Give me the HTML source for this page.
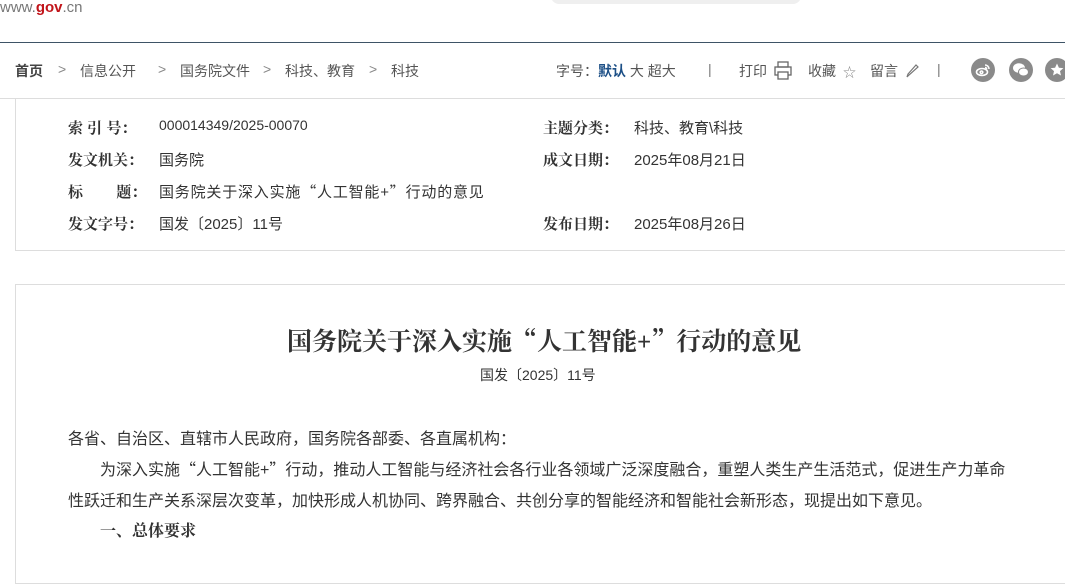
<!DOCTYPE html>
<html><head><meta charset="utf-8"><style>
*{margin:0;padding:0;box-sizing:border-box}
body{width:1065px;height:553px;overflow:hidden;background:#fff;position:relative;font-family:"Liberation Sans","Noto Sans CJK SC",sans-serif;color:#333}
.a{position:absolute;white-space:nowrap}
.q{font-family:"Noto Sans CJK SC",sans-serif}
.nav{font-size:14px;color:#555;top:61px}
.lab{font-weight:bold;font-size:15px;color:#333;font-family:"Liberation Sans","Noto Serif CJK SC",serif}
.val{font-size:15px;color:#333}
.body{font-size:16px;color:#333}
.circ{position:absolute;top:58px;width:24px;height:24px;border-radius:50%;background:#8a8a8a}
</style></head><body>
<div class="a" style="left:0;top:-1px;font-size:15px;color:#777">www.<b style="color:#c1141a">gov</b>.cn</div>
<div class="a" style="left:551px;top:-12px;width:250px;height:16px;border-radius:8px;background:#efefef"></div>
<div class="a" style="left:0;top:42px;width:1065px;height:1px;background:#3e5466"></div>

<div class="a nav" style="left:15px;font-weight:bold;color:#444">首页</div>
<div class="a nav" style="left:58px;color:#888">&gt;</div>
<div class="a nav" style="left:80px">信息公开</div>
<div class="a nav" style="left:158px;color:#888">&gt;</div>
<div class="a nav" style="left:180px">国务院文件</div>
<div class="a nav" style="left:263px;color:#888">&gt;</div>
<div class="a nav" style="left:285px">科技、教育</div>
<div class="a nav" style="left:369px;color:#888">&gt;</div>
<div class="a nav" style="left:391px">科技</div>

<div class="a nav" style="left:556px">字号：<b style="color:#1c4f86">默认</b> 大 超大</div>
<div class="a nav" style="left:708px;color:#777">|</div>
<div class="a nav" style="left:739px">打印</div>
<svg class="a" style="left:773px;top:59px" width="20" height="22" viewBox="0 0 20 22" fill="none" stroke="#666" stroke-width="1.3"><rect x="5" y="3" width="10" height="5"/><rect x="2" y="8" width="16" height="8"/><rect x="5" y="13" width="10" height="7" fill="#fff"/></svg>
<div class="a nav" style="left:808px">收藏</div>
<div class="a nav" style="left:843px;color:#888;font-size:13px;top:62px">☆</div>
<div class="a nav" style="left:870px">留言</div>
<svg class="a" style="left:906px;top:62px" width="14" height="16" viewBox="0 0 14 16" fill="none" stroke="#777" stroke-width="1.2"><path d="M3 13 L1 15 L2 12 L10 3 L12 5 Z"/></svg>
<div class="a nav" style="left:937px;color:#777">|</div>
<div class="circ" style="left:971px"></div>
<svg class="a" style="left:975px;top:63px" width="16" height="14" viewBox="0 0 16 14" fill="none" stroke="#fff" stroke-width="1.6"><ellipse cx="7" cy="9" rx="5.5" ry="3.5"/><circle cx="6.5" cy="9.3" r="1.3"/><path d="M10 2a4 4 0 0 1 4 4M10 4.5a1.6 1.6 0 0 1 1.6 1.6"/></svg>
<div class="circ" style="left:1009px"></div>
<svg class="a" style="left:1012px;top:62px" width="18" height="16" viewBox="0 0 18 16" fill="#fff"><ellipse cx="7" cy="6" rx="6" ry="4.8"/><ellipse cx="11.5" cy="10" rx="5" ry="4" stroke="#8a8a8a" stroke-width="1"/></svg>
<div class="circ" style="left:1045px"></div>
<svg class="a" style="left:1049px;top:62px" width="16" height="16" viewBox="0 0 16 16" fill="#fff"><path d="M8 1.5l1.9 4.2 4.5.4-3.4 3 1 4.4L8 11.2 4 13.5l1-4.4-3.4-3 4.5-.4z"/></svg>
<div class="a" style="left:0;top:98px;width:1065px;height:1px;background:#ddd"></div>

<div class="a" style="left:15px;top:98px;width:1070px;height:153px;border:1px solid #ddd"></div>
<div class="a lab" style="left:68px;top:117px">索 引 号：</div>
<div class="a val" style="left:159px;top:117px;font-size:14px">000014349/2025-00070</div>
<div class="a lab" style="left:68px;top:149px">发文机关：</div>
<div class="a val" style="left:159px;top:149px">国务院</div>
<div class="a lab" style="left:68px;top:181px">标&nbsp;&nbsp;&nbsp;&nbsp;&nbsp;&nbsp;&nbsp;&nbsp;题：</div>
<div class="a val" style="left:159px;top:181px;letter-spacing:0.8px">国务院关于深入实施<span class="q">“</span>人工智能+<span class="q">”</span>行动的意见</div>
<div class="a lab" style="left:68px;top:213px">发文字号：</div>
<div class="a val" style="left:159px;top:213px">国发〔2025〕11号</div>
<div class="a lab" style="left:543px;top:117px">主题分类：</div>
<div class="a val" style="left:634px;top:117px">科技、教育\科技</div>
<div class="a lab" style="left:543px;top:149px">成文日期：</div>
<div class="a val" style="left:634px;top:149px">2025年08月21日</div>
<div class="a lab" style="left:543px;top:213px">发布日期：</div>
<div class="a val" style="left:634px;top:213px">2025年08月26日</div>

<div class="a" style="left:15px;top:284px;width:1070px;height:300px;border:1px solid #ddd"></div>
<div class="a" style="left:287px;top:322px;font-size:25px;font-weight:bold;color:#333;font-family:'Liberation Serif','Noto Serif CJK SC',serif">国务院关于深入实施<span style="font-family:'Noto Serif CJK SC',serif">“</span>人工智能+<span style="font-family:'Noto Serif CJK SC',serif">”</span>行动的意见</div>
<div class="a" style="left:480px;top:365px;font-size:14px;color:#333">国发〔2025〕11号</div>
<div class="a body" style="left:68px;top:425px">各省、自治区、直辖市人民政府，国务院各部委、各直属机构：</div>
<div class="a body" style="left:100px;top:456px">为深入实施<span class="q">“</span>人工智能+<span class="q">”</span>行动，推动人工智能与经济社会各行业各领域广泛深度融合，重塑人类生产生活范式，促进生产力革命</div>
<div class="a body" style="left:68px;top:487px">性跃迁和生产关系深层次变革，加快形成人机协同、跨界融合、共创分享的智能经济和智能社会新形态，现提出如下意见。</div>
<div class="a body" style="left:100px;top:518px;font-weight:bold;font-family:'Liberation Serif','Noto Serif CJK SC',serif">一、总体要求</div>
</body></html>
